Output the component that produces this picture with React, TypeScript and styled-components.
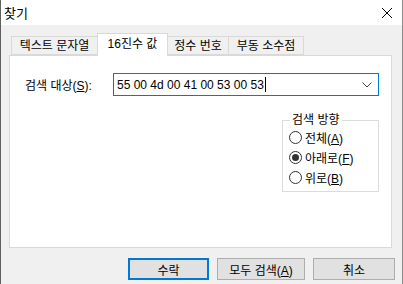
import React from "react";
import styled, { createGlobalStyle } from "styled-components";

const GlobalStyle = createGlobalStyle`
  html, body {
    margin: 0;
    padding: 0;
    background: #f0f0f0;
  }
  body {
    font-family: "Liberation Sans", "Noto Sans CJK KR", sans-serif;
    font-size: 12px;
    color: #000;
  }
`;

const Window = styled.div`
  width: 403px;
  height: 284px;
  box-sizing: border-box;
  background: #f0f0f0;
  border-left: 1px solid #5f5f5f;
  border-right: 1px solid #8a8a8a;
  display: flex;
  flex-direction: column;
`;

const TitleBar = styled.div`
  height: 25px;
  background: #fff;
  display: flex;
  align-items: center;
  justify-content: space-between;
  padding: 0 9px 0 3px;
  font-size: 13px;
`;

const Body = styled.div`
  padding: 8px 10px 0 8px;
  display: flex;
  flex-direction: column;
`;

const TabRow = styled.div`
  display: flex;
  align-items: flex-end;
  height: 22px;
  padding-left: 3px;
  position: relative;
  z-index: 1;
`;

const Tab = styled.div<{ $active?: boolean; $w: number }>`
  box-sizing: border-box;
  width: ${(p) => p.$w}px;
  height: ${(p) => (p.$active ? "23px" : "19px")};
  margin-bottom: ${(p) => (p.$active ? "-1px" : "0")};
  padding-top: ${(p) => (p.$active ? "2px" : "1px")};
  background: ${(p) => (p.$active ? "#fff" : "#f0f0f0")};
  border: 1px solid #d9d9d9;
  border-bottom: ${(p) => (p.$active ? "none" : "1px solid #d9d9d9")};
  margin-left: -1px;
  text-align: center;
  white-space: nowrap;
  line-height: 16px;
`;

const Panel = styled.div`
  box-sizing: border-box;
  height: 193px;
  background: #fff;
  border: 1px solid #d9d9d9;
  padding: 17px 12px 0 15px;
  display: flex;
  flex-direction: column;
`;

const FieldRow = styled.div`
  display: flex;
  align-items: center;
  justify-content: space-between;
`;

const Label = styled.label`
  white-space: nowrap;
`;

const Combo = styled.div`
  box-sizing: border-box;
  width: 266px;
  height: 23px;
  border: 1px solid #0078d7;
  display: flex;
  align-items: center;
  padding: 0 6px 0 3px;
  justify-content: space-between;
`;

const ComboText = styled.span`
  display: flex;
  align-items: center;
`;

const Caret = styled.span`
  display: inline-block;
  width: 1px;
  height: 15px;
  background: #000;
  margin-left: 1px;
`;

const GroupRow = styled.div`
  display: flex;
  justify-content: flex-end;
  margin-top: 17px;
`;

const Group = styled.fieldset`
  box-sizing: border-box;
  width: 97px;
  height: 79px;
  margin: 0;
  border: 1px solid #dcdcdc;
  padding: 2px 0 0 6px;
  display: flex;
  flex-direction: column;
  gap: 4px;
`;

const Legend = styled.legend`
  padding: 0 2px;
  margin-left: 1px;
  line-height: 14px;
`;

const RadioRow = styled.div`
  display: flex;
  align-items: center;
  gap: 3px;
  height: 16px;
`;

const RadioCircle = styled.span<{ $checked?: boolean }>`
  box-sizing: border-box;
  width: 13px;
  height: 13px;
  border-radius: 50%;
  border: 1px solid #333;
  display: flex;
  align-items: center;
  justify-content: center;
  &::after {
    content: "";
    width: 7px;
    height: 7px;
    border-radius: 50%;
    background: ${(p) => (p.$checked ? "#333" : "transparent")};
  }
`;

const ButtonRow = styled.div`
  display: flex;
  justify-content: flex-end;
  gap: 8px;
  margin-top: 10px;
  margin-right: -3px;
`;

const Button = styled.button<{ $default?: boolean; $w: number }>`
  box-sizing: border-box;
  width: ${(p) => p.$w}px;
  height: 22px;
  background: #e1e1e1;
  border: ${(p) => (p.$default ? "2px solid #0078d7" : "1px solid #adadad")};
  font: inherit;
  color: #000;
  padding: 0;
`;

const CloseIcon = () => (
  <svg width="12" height="12" viewBox="0 0 12 12">
    <path d="M1 1 L11 11 M11 1 L1 11" stroke="#000" strokeWidth="1" />
  </svg>
);

const Chevron = () => (
  <svg width="10" height="6" viewBox="0 0 10 6">
    <path d="M0.5 0.5 L5 5 L9.5 0.5" stroke="#444" strokeWidth="1" fill="none" />
  </svg>
);

const App = () => (
  <>
    <GlobalStyle />
    <Window>
      <TitleBar>
        <span>찾기</span>
        <CloseIcon />
      </TitleBar>
      <Body>
        <TabRow>
          <Tab $w={87}>텍스트 문자열</Tab>
          <Tab $active $w={71}>
            16진수 값
          </Tab>
          <Tab $w={62}>정수 번호</Tab>
          <Tab $w={76}>부동 소수점</Tab>
        </TabRow>
        <Panel>
          <FieldRow>
            <Label>
              검색 대상(<u>S</u>):
            </Label>
            <Combo>
              <ComboText>
                55 00 4d 00 41 00 53 00 53
                <Caret />
              </ComboText>
              <Chevron />
            </Combo>
          </FieldRow>
          <GroupRow>
            <Group>
              <Legend>검색 방향</Legend>
              <RadioRow>
                <RadioCircle />
                <span>
                  전체(<u>A</u>)
                </span>
              </RadioRow>
              <RadioRow>
                <RadioCircle $checked />
                <span>
                  아래로(<u>F</u>)
                </span>
              </RadioRow>
              <RadioRow>
                <RadioCircle />
                <span>
                  위로(<u>B</u>)
                </span>
              </RadioRow>
            </Group>
          </GroupRow>
        </Panel>
        <ButtonRow>
          <Button $default $w={81}>
            수락
          </Button>
          <Button $w={88}>
            모두 검색(<u>A</u>)
          </Button>
          <Button $w={82}>취소</Button>
        </ButtonRow>
      </Body>
    </Window>
  </>
);

export default App;
